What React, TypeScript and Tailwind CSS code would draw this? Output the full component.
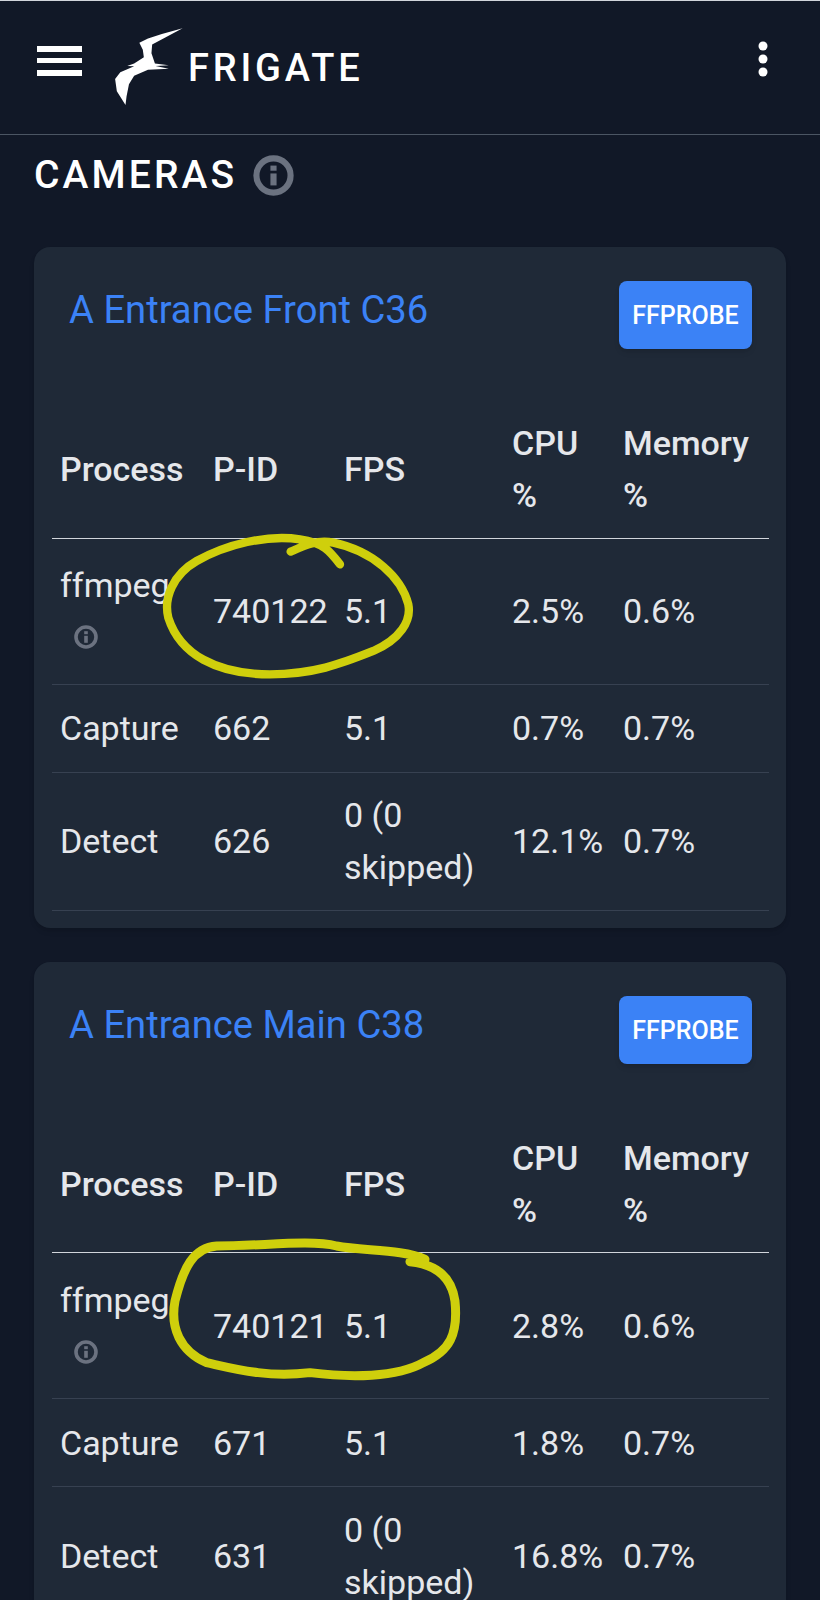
const font = { fontFamily: 'Roboto, sans-serif' }

type Row = { name: string; pid: string; fps: string; cpu: string; mem: string; info?: boolean; h: string }

function InfoIcon({ size }: { size: number }) {
  return (
    <svg width={size} height={size} viewBox="0 0 24 24" className="block">
      <circle cx="12" cy="12" r="10" fill="none" stroke="#6b7280" strokeWidth="3.6" />
      <rect x="10.2" y="10.8" width="3.6" height="7" fill="#6b7280" />
      <rect x="10.2" y="6.2" width="3.6" height="3" fill="#6b7280" />
    </svg>
  )
}

function Bird() {
  return (
    <svg width="80" height="90" viewBox="330 70 220 260" className="block">
      <path
        fill="#ffffff"
        d="M540 88 L480 105 L440 118 L415 130 L425 150 L428 172 L400 190 L380 197 L400 198 L360 215 L345 235 L350 270 L375 310 L378 285 L385 250 L400 225 L440 208 L500 205 L462 197 L500 195 L460 190 L450 160 L452 135 L490 115 Z"
      />
    </svg>
  )
}

function CameraCard({ title, rows }: { title: string; rows: Row[] }) {
  return (
    <div className="rounded-[16px] bg-[#1f2937] py-[17px] pr-[16px] pl-[18px] shadow-md">
      <div className="flex items-center justify-between py-[17px] pr-[18px] pl-[17px]">
        <div className="pb-[10px] text-[38.2px] leading-[52px] text-[#3b82f6]">{title}</div>
        <div className="flex h-[68px] w-[133px] items-center justify-center rounded-[8px] bg-[#3b82f6] pt-[2px] text-[25px] font-medium text-white shadow-md">
          FFPROBE
        </div>
      </div>
      <table className="mt-[49px] w-[717px] table-fixed text-[34px] leading-[52px] text-[#e5e7eb]">
        <colgroup>
          <col className="w-[153px]" />
          <col className="w-[131px]" />
          <col className="w-[168px]" />
          <col className="w-[111px]" />
          <col className="w-[154px]" />
        </colgroup>
        <thead>
          <tr className="h-[123px] border-b border-[#d1d5db] text-left">
            <th className="px-2 pb-[14px] font-medium">Process</th>
            <th className="px-2 pb-[14px] font-medium">P-ID</th>
            <th className="px-2 pb-[14px] font-medium">FPS</th>
            <th className="px-2 pb-[14px] font-medium">CPU %</th>
            <th className="px-2 pb-[14px] font-medium">Memory %</th>
          </tr>
        </thead>
        <tbody>
          {rows.map((r) => (
            <tr key={r.name} className={`${r.h} border-b border-[#374151]`}>
              <td className="px-2">
                {r.name}
                {r.info && (
                  <div className="ml-[14px] flex h-[52px] items-center">
                    <InfoIcon size={24} />
                  </div>
                )}
              </td>
              <td className="px-2">{r.pid}</td>
              <td className="px-2">{r.fps}</td>
              <td className="px-2">{r.cpu}</td>
              <td className="px-2">{r.mem}</td>
            </tr>
          ))}
        </tbody>
      </table>
    </div>
  )
}

const cameras: { title: string; rows: Row[] }[] = [
  {
    title: 'A Entrance Front C36',
    rows: [
      { name: 'ffmpeg', pid: '740122', fps: '5.1', cpu: '2.5%', mem: '0.6%', info: true, h: 'h-[146px]' },
      { name: 'Capture', pid: '662', fps: '5.1', cpu: '0.7%', mem: '0.7%', h: 'h-[88px]' },
      { name: 'Detect', pid: '626', fps: '0 (0 skipped)', cpu: '12.1%', mem: '0.7%', h: 'h-[138px]' },
    ],
  },
  {
    title: 'A Entrance Main C38',
    rows: [
      { name: 'ffmpeg', pid: '740121', fps: '5.1', cpu: '2.8%', mem: '0.6%', info: true, h: 'h-[146px]' },
      { name: 'Capture', pid: '671', fps: '5.1', cpu: '1.8%', mem: '0.7%', h: 'h-[88px]' },
      { name: 'Detect', pid: '631', fps: '0 (0 skipped)', cpu: '16.8%', mem: '0.7%', h: 'h-[138px]' },
    ],
  },
]

export default function App() {
  return (
    <div className="relative h-[1600px] overflow-hidden border-t border-[#d1d5db] bg-[#111827] text-white" style={font}>
      {/* Header */}
      <div className="flex h-[134px] items-start border-b border-[#4b5563] pl-[37px] pr-[51px]">
        <svg width="46" height="32" viewBox="0 0 46 32" className="mt-[45px] block">
          <rect x="0" y="0" width="45" height="6" fill="#fff" />
          <rect x="0" y="12" width="45" height="5" fill="#fff" />
          <rect x="0" y="24" width="45" height="6" fill="#fff" />
        </svg>
        <div className="mt-[21px] ml-[25px]">
          <Bird />
        </div>
        <div className="mt-[43px] text-[38px] leading-[48px] font-medium tracking-[0.1em]">FRIGATE</div>
        <svg width="12" height="36" viewBox="0 0 12 36" className="mt-[40px] ml-auto block">
          <circle cx="6" cy="5" r="4.5" fill="#fff" />
          <circle cx="6" cy="18" r="4.5" fill="#fff" />
          <circle cx="6" cy="31" r="4.5" fill="#fff" />
        </svg>
      </div>

      {/* Page */}
      <div className="px-[34px]">
        <div className="flex h-[78px] items-center gap-[16px] pt-[2px]">
          <div className="text-[39px] leading-[48px] font-medium tracking-[0.08em]">CAMERAS</div>
          <InfoIcon size={41} />
        </div>
        <div className="mt-[34px] flex flex-col gap-[34px]">
          {cameras.map((c) => (
            <CameraCard key={c.title} title={c.title} rows={c.rows} />
          ))}
        </div>
      </div>

      {/* Hand-drawn highlights over the screenshot */}
      <svg className="absolute inset-0" width="820" height="1600" viewBox="0 0 820 1600" fill="none">
        <g transform="translate(40 510) scale(0.3333)" stroke="#cfcf0c" strokeWidth="25" strokeLinecap="round" strokeLinejoin="round">
          <path d="M900 160 C870 120 850 95 780 85 C680 70 560 100 470 150 C400 190 370 260 385 320 C420 430 530 490 690 490 C820 490 900 460 1000 420 C1080 385 1115 330 1105 280 C1085 200 1000 120 880 95 C830 85 790 105 752 122" />
        </g>
        <g transform="translate(150 1220) scale(0.3333)" stroke="#cfcf0c" strokeWidth="27" strokeLinecap="round" strokeLinejoin="round">
          <path d="M825 115 C760 85 640 90 560 75 C480 55 340 75 200 75 C130 80 100 140 75 240 C60 320 90 390 170 425 C260 445 350 470 480 455 C600 470 740 470 820 425 C900 390 925 340 915 240 C905 170 860 130 780 122" />
        </g>
      </svg>
    </div>
  )
}
